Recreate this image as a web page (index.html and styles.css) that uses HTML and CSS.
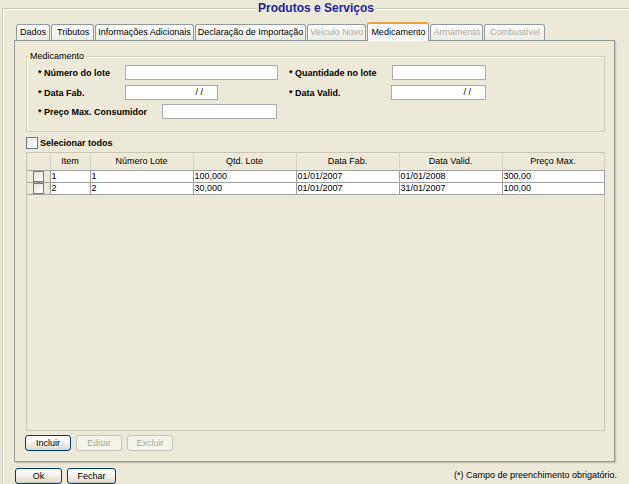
FILE: index.html
```html
<!DOCTYPE html>
<html lang="pt">
<head>
<meta charset="utf-8">
<title>Produtos e Serviços</title>
<link rel="stylesheet" href="styles.css">
</head>
<body>
<fieldset class="frame">
  <legend class="frame-title">Produtos e Serviços</legend>

  <div class="tabs">
    <div class="tab">Dados</div>
    <div class="tab tab-wide">Tributos</div>
    <div class="tab tab-narrow">Informações Adicionais</div>
    <div class="tab tab-narrow">Declaração de Importação</div>
    <div class="tab off tab-narrow">Veículo Novo</div>
    <div class="tab on">Medicamento</div>
    <div class="tab off tab-narrow">Armamento</div>
    <div class="tab off tab-wide">Combustível</div>
  </div>

  <div class="panel">
    <fieldset class="group">
      <legend class="group-title">Medicamento</legend>
      <div class="row">
        <div class="cell">
          <span class="lbl lbl-a">* Número do lote</span>
          <span class="field f-lote"></span>
        </div>
        <div class="cell-r">
          <span class="lbl lbl-b">* Quantidade no lote</span>
          <span class="field f-qtd"></span>
        </div>
      </div>
      <div class="row">
        <div class="cell">
          <span class="lbl lbl-a">* Data Fab.</span>
          <span class="field date f-fab">/ /</span>
        </div>
        <div class="cell-r">
          <span class="lbl lbl-c">* Data Valid.</span>
          <span class="field date f-val">/ /</span>
        </div>
      </div>
      <div class="row">
        <div class="cell">
          <span class="lbl lbl-d">* Preço Max. Consumidor</span>
          <span class="field f-preco"></span>
        </div>
      </div>
    </fieldset>

    <div class="select-all"><span class="chk"></span>Selecionar todos</div>

    <div class="grid-box">
      <table class="grid">
        <colgroup>
          <col class="c-sel"><col class="c-item"><col class="c-w"><col class="c-w"><col class="c-w"><col class="c-w"><col class="c-last">
        </colgroup>
        <thead>
          <tr><th></th><th>Item</th><th>Número Lote</th><th>Qtd. Lote</th><th>Data Fab.</th><th>Data Valid.</th><th>Preço Max.</th></tr>
        </thead>
        <tbody>
          <tr><td class="sel"><span class="chk-sm"></span></td><td>1</td><td>1</td><td>100,000</td><td>01/01/2007</td><td>01/01/2008</td><td>300,00</td></tr>
          <tr><td class="sel"><span class="chk-sm"></span></td><td>2</td><td>2</td><td>30,000</td><td>01/01/2007</td><td>31/01/2007</td><td>100,00</td></tr>
        </tbody>
      </table>
    </div>

    <div class="actions">
      <button class="btn">Incluir</button>
      <button class="btn" disabled>Editar</button>
      <button class="btn" disabled>Excluir</button>
    </div>
  </div>

  <div class="footer">
    <div class="footer-buttons">
      <button class="btn btn-ok">Ok</button>
      <button class="btn btn-close">Fechar</button>
    </div>
    <span class="note">(*) Campo de preenchimento obrigatório.</span>
  </div>
</fieldset>
</body>
</html>
```
FILE: styles.css
```css
* { box-sizing: border-box; }

html, body {
  margin: 0;
  height: 100%;
  overflow: hidden;
  background: #ece9d8;
  font-family: "Liberation Sans", Arial, sans-serif;
  font-size: 9px;
  color: #000;
}

/* outer frame (its right and bottom edges lie outside the window) */
.frame {
  margin: 1px 0 0 2px;
  padding: 7px 0 0 11px;
  border: 1px solid #cdcbba;
  border-right: none;
  border-bottom: none;
  box-shadow: inset 1px 1px 0 #fff;
  width: 627px;
  height: 483px;
  min-width: 0;
}
.frame-title {
  margin-left: 242px;
  padding: 0 2px;
  font-size: 12px;
  font-weight: bold;
  line-height: 14px;
  color: #2323a6;
  background: #ece9d8;
}

/* tabs */
.tabs {
  display: flex;
  align-items: flex-end;
  gap: 1px;
  height: 18px;
  margin-left: 2px;
}
.tab {
  height: 16px;
  line-height: 15px;
  padding: 0 3px;
  border: 1px solid #919b9c;
  border-bottom: none;
  border-radius: 3px 3px 0 0;
  background: linear-gradient(#fefefe, #ecebe5);
  white-space: nowrap;
}
.tab-wide { padding: 0 4px 0 5px; }
.tab-narrow { padding: 0 2px; }
.tab.off { color: #aca899; }
.tab.on {
  position: relative;
  z-index: 1;
  height: 19px;
  margin-bottom: -1px;
  padding: 0 3px;
  line-height: 16px;
  border-top: 2px solid #e8a33c;
  background: #fcfcfe;
}

/* tab page */
.panel {
  width: 601px;
  height: 422px;
  border: 1px solid #919b9c;
  box-shadow: 1px 1px 0 #c6c4b4, 2px 2px 0 #dfddcf;
  padding: 10px 9px 0 11px;
  display: flex;
  flex-direction: column;
}

.group {
  margin: 0;
  padding: 3px 11px 12px;
  border: 1px solid #d0d0bf;
  box-shadow: inset 1px 1px 0 #fff;
  display: flex;
  flex-direction: column;
  gap: 4px;
  min-width: 0;
}
.group-title {
  margin-left: -9px;
  padding: 0 1px;
  line-height: 11px;
  background: #ece9d8;
}

.row {
  display: flex;
  align-items: center;
  height: 15px;
}
.row + .row { margin-top: 1px; }
.row + .row + .row { margin-top: 0; }
.cell {
  display: flex;
  align-items: center;
  width: 251px;
  flex: none;
}
.cell-r {
  display: flex;
  align-items: center;
}
.lbl {
  font-weight: bold;
  flex: none;
  white-space: nowrap;
}
.lbl-a { width: 87px; }
.lbl-b { width: 103px; }
.lbl-c { width: 102px; }
.lbl-d { width: 124px; }

.field {
  display: block;
  flex: none;
  height: 15px;
  background: #fff;
  border: 1px solid #a5acb2;
}
.field.date {
  text-align: right;
  padding-right: 14px;
  line-height: 13px;
}
.f-lote { width: 153px; }
.f-qtd { width: 94px; }
.f-fab { width: 93px; }
.f-val { width: 95px; }
.f-preco { width: 115px; }

/* select all */
.select-all {
  display: flex;
  align-items: center;
  gap: 2px;
  height: 12px;
  margin-top: 5px;
  font-weight: bold;
  white-space: nowrap;
}
.chk {
  width: 12px;
  height: 12px;
  flex: none;
  border: 1px solid #6d7b8d;
  background: linear-gradient(135deg, #e3e3dc, #fff);
}

/* grid */
.grid-box {
  margin-top: 3px;
  width: 579px;
  height: 279px;
  border: 1px solid #c8c5b5;
  flex: none;
}
.grid {
  border-collapse: collapse;
  table-layout: fixed;
  width: 577px;
}
.c-sel { width: 23px; }
.c-item { width: 40px; }
.c-w { width: 103px; }
.c-last { width: 102px; }

.grid th {
  height: 17px;
  padding: 0;
  font-weight: normal;
  text-align: center;
  border-right: 1px solid #d6d3c4;
  border-bottom: 1px solid #a0a0a0;
  white-space: nowrap;
}
.grid td {
  height: 12px;
  padding: 0 1px;
  line-height: 10px;
  background: #fff;
  border: 1px solid #a0a0a0;
  white-space: nowrap;
  overflow: hidden;
}
.grid td.sel {
  background: #ece9d8;
  text-align: center;
  border-left: none;
}
.chk-sm {
  display: inline-block;
  vertical-align: middle;
  width: 11px;
  height: 11px;
  border: 1px solid #6d7b8d;
  background: linear-gradient(135deg, #e3e3dc, #fff);
}

/* buttons */
.actions {
  display: flex;
  gap: 5px;
  margin-top: 4px;
  margin-left: -1px;
}
.btn {
  width: 46px;
  height: 16px;
  padding: 0;
  font: inherit;
  color: #000;
  border: 1px solid #003c74;
  border-radius: 3px;
  background: linear-gradient(#ffffff, #f4f3ee 45%, #e3e0d4 85%, #d6d0c5);
}
.btn:disabled {
  color: #aca899;
  border-color: #c9c7ba;
  background: #f5f4ea;
}

.footer {
  display: flex;
  align-items: center;
  justify-content: space-between;
  width: 603px;
  height: 16px;
  margin-top: 6px;
  padding-left: 1px;
}
.footer-buttons {
  display: flex;
  gap: 5px;
}
.btn-ok { width: 47px; }
.btn-close { width: 49px; }
.note {
  white-space: nowrap;
  margin-top: -2px;
}
```
